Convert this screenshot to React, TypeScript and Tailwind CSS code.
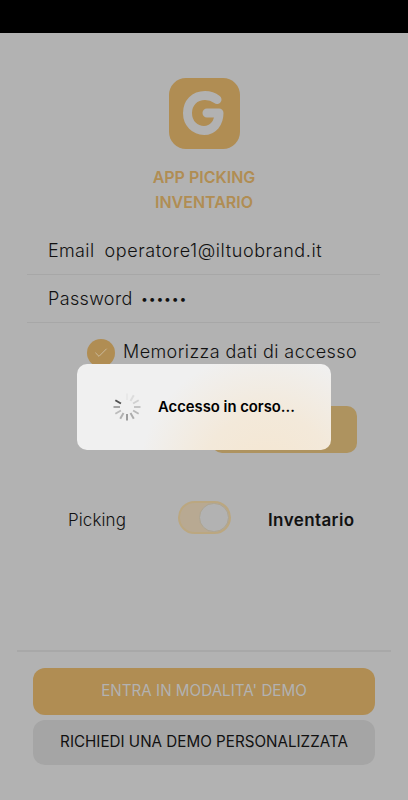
import { Check } from "lucide-react";

const spinnerBars = [
  "#e8e8e8", "#dcdcdc", "#d0d0d0", "#c4c4c4", "#b8b8b8", "#acacac",
  "#9c9c9c", "#b0b0b0", "#bcbcbc", "#a4a4a4", "#505050", "#f0f0f0",
];

function Spinner() {
  return (
    <svg width="30" height="30" viewBox="0 0 30 30" fill="none">
      {spinnerBars.map((color, i) => (
        <line
          key={i}
          x1="15"
          y1="1.5"
          x2="15"
          y2="8"
          stroke={color}
          strokeWidth="2"
          transform={`rotate(${i * 30} 15 15)`}
        />
      ))}
    </svg>
  );
}

function Logo() {
  return (
    <div className="w-[71px] h-[71px] rounded-[17px] bg-[#b08d53] flex items-center justify-center">
      <svg width="46" height="50" viewBox="0 0 46 50" fill="none">
        <path
          d="M36 10.5C32.5 7.8 28.5 6.5 24 6.5C13.5 6.5 6.5 14 6.5 24C6.5 34.5 14 41.5 23 41.5C32 41.5 38 34 38 24H26"
          stroke="#b2b2b2"
          strokeWidth="9"
          strokeLinecap="round"
          strokeLinejoin="round"
        />
      </svg>
    </div>
  );
}

function Field({ label, children }: { label: string; children: React.ReactNode }) {
  return (
    <div className="h-12 flex items-center gap-2 pl-[21px] border-b border-[#a7a7a7] text-[#111111] text-[18px] font-light tracking-[0.35px]">
      <span>{label}</span>
      {children}
    </div>
  );
}

export default function App() {
  return (
    <main className="relative w-[408px] h-[800px] bg-[#b2b2b2] overflow-hidden font-['Inter',sans-serif]">
      <div className="h-[33px] bg-black" />

      <div className="flex flex-col items-center pt-[45px]">
        <Logo />
        <h1 className="mt-4 text-[16px] leading-[25px] font-semibold text-[#b08d53] text-center">
          APP PICKING
          <br />
          INVENTARIO
        </h1>
      </div>

      <div className="mt-[12px] mx-[27px] w-[353px]">
        <Field label="Email">
          <span className="ml-[2px] tracking-[0.6px]">operatore1@iltuobrand.it</span>
        </Field>
        <Field label="Password">
          <span className="text-[14px] tracking-[-0.2px]">••••••</span>
        </Field>
      </div>

      <div className="mt-[15px] ml-[87px] flex items-center gap-2">
        <div className="w-7 h-7 rounded-full bg-[#b08d53] flex items-center justify-center">
          <Check size={16} strokeWidth={1} color="#d8d0c0" />
        </div>
        <span className="pb-[2px] text-[18px] font-light tracking-[0.42px] text-[#111111]">Memorizza dati di accesso</span>
      </div>

      <div className="mt-[39px] ml-[212px] w-[145px] h-[47px] rounded-[10px] bg-[#ae935f]" />

      <div className="mt-[48px] flex items-center pl-[68px]">
        <span className="w-[110px] pt-[7px] text-[17px] font-light tracking-[0.1px] text-[#111111]">Picking</span>
        <div className="w-[53px] h-[33px] rounded-full bg-[#b8a992] border-2 border-[#bba780] flex items-center justify-end">
          <div className="w-[30px] h-[29px] rounded-full bg-[#b2b2b2] border border-[#ada490]" />
        </div>
        <span className="ml-[37px] pt-[7px] text-[17px] font-semibold tracking-[0.4px] text-[#111111]">Inventario</span>
      </div>

      <div className="mt-[116px] mx-[17px] h-[2px] bg-[#a8a8a8]" />

      <div className="mt-[16px] mx-[33px] flex flex-col gap-[5px]">
        <button className="h-[47px] rounded-xl bg-[#b08d53] text-[15.2px] font-normal text-[#b2b2b2]">
          ENTRA IN MODALITA' DEMO
        </button>
        <button className="h-[45px] rounded-xl bg-[#a5a5a5] text-[15.2px] font-normal text-[#111111]">
          RICHIEDI UNA DEMO PERSONALIZZATA
        </button>
      </div>

      <div className="absolute left-[77px] top-[364px] w-[254px] h-[86px] rounded-[10px] flex items-center pl-[35px] gap-[16px] bg-[radial-gradient(circle_at_75%_135%,#f5e6d0_0%,#f3e9da_30%,#f0f0f0_58%)]">
        <Spinner />
        <span className="text-[14.8px] font-semibold text-black">Accesso in corso...</span>
      </div>
    </main>
  );
}
